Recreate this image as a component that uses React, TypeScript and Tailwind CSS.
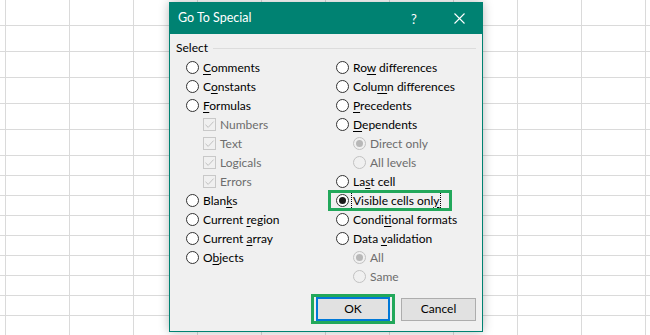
import React from 'react';

const FONT = "font-['Lato','Noto_Sans',sans-serif]";

const ROW_HEIGHTS = [26, 26, 26, 26, 26, 26, 20, 20, 20, 20, 20, 20, 20, 20, 20];

type Opt = { label: string; key?: number; kind: 'radio' | 'check' | 'subradio'; checked?: boolean; disabled?: boolean };

const LEFT: Opt[] = [
  { label: 'Comments', key: 0, kind: 'radio' },
  { label: 'Constants', key: 1, kind: 'radio' },
  { label: 'Formulas', key: 0, kind: 'radio' },
  { label: 'Numbers', kind: 'check', checked: true, disabled: true },
  { label: 'Text', kind: 'check', checked: true, disabled: true },
  { label: 'Logicals', kind: 'check', checked: true, disabled: true },
  { label: 'Errors', kind: 'check', checked: true, disabled: true },
  { label: 'Blanks', key: 4, kind: 'radio' },
  { label: 'Current region', key: 8, kind: 'radio' },
  { label: 'Current array', key: 8, kind: 'radio' },
  { label: 'Objects', key: 1, kind: 'radio' },
];

const RIGHT: Opt[] = [
  { label: 'Row differences', key: 2, kind: 'radio' },
  { label: 'Column differences', key: 4, kind: 'radio' },
  { label: 'Precedents', key: 0, kind: 'radio' },
  { label: 'Dependents', key: 0, kind: 'radio' },
  { label: 'Direct only', kind: 'subradio', checked: true, disabled: true },
  { label: 'All levels', kind: 'subradio', disabled: true },
  { label: 'Last cell', key: 2, kind: 'radio' },
  { label: 'Visible cells only', key: 17, kind: 'radio', checked: true },
  { label: 'Conditional formats', key: 5, kind: 'radio' },
  { label: 'Data validation', key: 5, kind: 'radio' },
  { label: 'All', kind: 'subradio', checked: true, disabled: true },
  { label: 'Same', kind: 'subradio', disabled: true },
];

const Label = ({ text, k }: { text: string; k?: number }) => {
  if (k === undefined) return <>{text}</>;
  return (
    <>
      {text.slice(0, k)}
      <span className="underline underline-offset-2">{text[k]}</span>
      {text.slice(k + 1)}
    </>
  );
};

const Radio = ({ checked, disabled }: { checked?: boolean; disabled?: boolean }) => (
  <span
    className={`flex h-[13px] w-[13px] shrink-0 items-center justify-center rounded-full border ${
      disabled ? 'border-[#c2c2c2] bg-[#f0f0f0]' : 'border-[#333] bg-white'
    }`}
  >
    {checked && <span className={`h-[7px] w-[7px] rounded-full ${disabled ? 'bg-[#b8b8b8]' : 'bg-[#1a1a1a]'}`} />}
  </span>
);

const Check = () => (
  <span className="flex h-[13px] w-[13px] shrink-0 items-center justify-center border border-[#c8c8c8] bg-[#f0f0f0]">
    <svg width="11" height="11" viewBox="0 0 11 11">
      <path d="M1.5 5.8 L4.2 8.4 L9.6 2.6" fill="none" stroke="#c0c0c0" strokeWidth="1" />
    </svg>
  </span>
);

const OptionRow = ({ o }: { o: Opt }) => {
  const sub = o.kind !== 'radio';
  const focus = o.label === 'Visible cells only';
  return (
    <div className={`relative flex h-[19px] items-center gap-[4px] ${sub ? 'pl-[17px]' : ''}`}>
      {o.kind === 'check' ? <Check /> : <Radio checked={o.checked} disabled={o.disabled} />}
      <span
        className={`whitespace-nowrap leading-[16px] ${o.disabled ? 'text-[#6d6d6d]' : 'text-black'} ${
          focus ? 'outline outline-1 outline-dotted outline-black -ml-[1px] px-[1px]' : ''
        }`}
      >
        <Label text={o.label} k={o.key} />
      </span>
      {focus && (
        <span className="pointer-events-none absolute -left-[8px] top-[-1px] h-[21px] w-[124px] border-[3px] border-[#22a85b]" />
      )}
    </div>
  );
};

export default function App() {
  return (
    <div className={`relative h-[335px] w-[650px] overflow-hidden bg-white ${FONT}`}>
      {/* sheet grid */}
      <div className="flex flex-col">
        {ROW_HEIGHTS.map((h, r) => (
          <div key={r} className="flex border-b border-[#dadada]" style={{ height: h }}>
            <div className="w-[6px] shrink-0 border-r border-[#dadada]" />
            {Array.from({ length: 10 }).map((_, c) => (
              <div key={c} className="w-[64px] shrink-0 border-r border-[#dadada]" />
            ))}
          </div>
        ))}
      </div>

      {/* dialog */}
      <div className="absolute left-[169px] top-[2px] flex h-[330px] w-[314px] flex-col border border-[#008272] bg-[#f0f0f0] text-[12px] shadow-[0_0_10px_rgba(0,0,0,0.28)]">
        <div className="flex h-[31px] shrink-0 items-center bg-[#008272] pl-[8px] text-white">
          <span className="flex-1 text-[12.5px]">Go To Special</span>
          <span className="w-[20px] text-center text-[13px] leading-[16px]">?</span>
          <span className="ml-[25px] mr-[13px] flex w-[20px] justify-center">
            <svg width="11" height="11" viewBox="0 0 11 11">
              <path d="M0.5 0.5 L10.5 10.5 M10.5 0.5 L0.5 10.5" stroke="white" strokeWidth="1.1" />
            </svg>
          </span>
        </div>

        <div className="flex flex-1 flex-col pl-[16px] pr-[6px] pt-[6px]">
          <div className="-ml-[10px] flex h-[16px] items-center gap-[5px]">
            <span className="text-black">Select</span>
            <span className="h-px flex-1 bg-[#dcdcdc]" />
          </div>

          <div className="mt-[2px] flex">
            <div className="w-[150px] shrink-0">
              {LEFT.map(o => <OptionRow key={o.label} o={o} />)}
            </div>
            <div>
              {RIGHT.map(o => <OptionRow key={o.label + o.kind} o={o} />)}
            </div>
          </div>

          <div className="mt-auto mb-[7px] flex items-center justify-end gap-[6px]">
            <div className="border-[3px] border-[#22a85b] px-[2px] py-0">
              <button className="h-[24px] w-[74px] border-2 border-[#0078d7] bg-[#e1e1e1] text-[12px] text-black">
                OK
              </button>
            </div>
            <button className="h-[23px] w-[75px] border border-[#adadad] bg-[#e1e1e1] text-[12px] text-black">
              Cancel
            </button>
          </div>
        </div>
      </div>
    </div>
  );
}
